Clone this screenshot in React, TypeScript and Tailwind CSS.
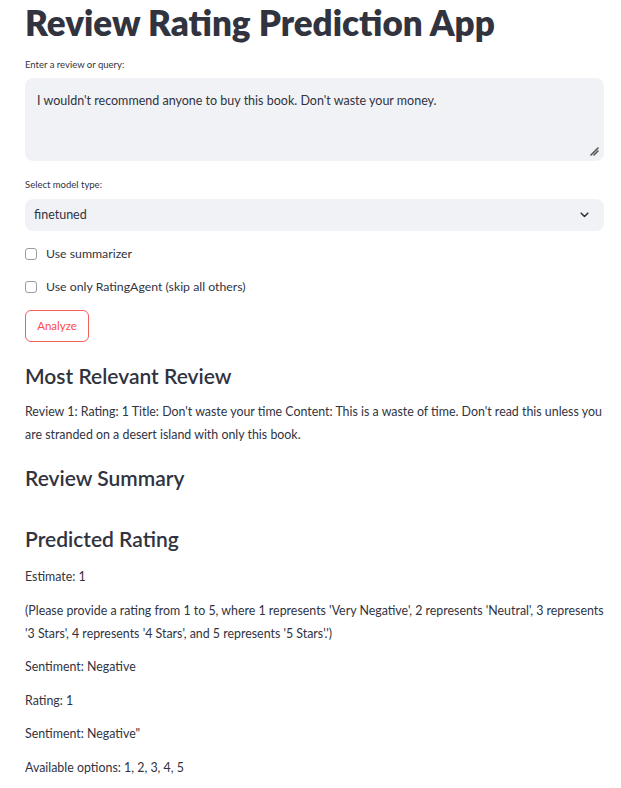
import React, { useState } from 'react';

const font = { fontFamily: 'Lato, "Noto Sans", sans-serif' };

function Check({ label }: { label: string }) {
  const [on, setOn] = useState(false);
  return (
    <label className="flex items-center gap-[9px] h-[20px] cursor-pointer">
      <span
        onClick={() => setOn(!on)}
        className={`w-[12px] h-[12px] rounded-[3px] border border-[#9a9ca6] ${on ? 'bg-[#ff4b4b]' : 'bg-white'}`}
      />
      <span className="text-[12.3px] text-[#31333f]">{label}</span>
    </label>
  );
}

export default function App() {
  const [text, setText] = useState("I wouldn't recommend anyone to buy this book. Don't waste your money.");
  const [model, setModel] = useState('finetuned');

  const results = [
    'Estimate: 1',
    "(Please provide a rating from 1 to 5, where 1 represents 'Very Negative', 2 represents 'Neutral', 3 represents '3 Stars', 4 represents '4 Stars', and 5 represents '5 Stars'.')",
    'Sentiment: Negative',
    'Rating: 1',
    'Sentiment: Negative"',
    'Available options: 1, 2, 3, 4, 5',
  ];

  return (
    <div className="w-[621px] min-h-[788px] bg-white pl-[25px] pr-[17px] text-[#31333f]" style={font}>
      <h1 className="text-[35px] font-extrabold leading-[44px] text-[#31333f]">Review Rating Prediction App</h1>

      <div className="mt-[14px] text-[9.5px] leading-[14px]">Enter a review or query:</div>
      <div className="relative mt-[6px] h-[83px] rounded-[8px] bg-[#f0f2f6]">
        <textarea
          value={text}
          onChange={(e) => setText(e.target.value)}
          className="w-full h-full resize-none bg-transparent pl-[12px] pr-[10px] pt-[14px] text-[12.5px] leading-[18px] text-[#31333f] outline-none"
          style={font}
        />
        <svg className="absolute right-[5px] bottom-[5px]" width="10" height="10" viewBox="0 0 10 10">
          <path d="M2 9 L9 2 M5 9 L9 5" stroke="#555" strokeWidth="1.6" strokeLinecap="round" />
        </svg>
      </div>

      <div className="mt-[17px] text-[9.5px] leading-[14px]">Select model type:</div>
      <div className="relative mt-[7px] h-[32px] rounded-[8px] bg-[#f0f2f6] flex items-center px-[9px]">
        <span className="text-[12.5px]">{model}</span>
        <select
          value={model}
          onChange={(e) => setModel(e.target.value)}
          className="absolute inset-0 opacity-0 cursor-pointer"
        >
          <option value="finetuned">finetuned</option>
          <option value="base">base</option>
        </select>
        <svg className="ml-auto mr-[6px]" width="9" height="6" viewBox="0 0 9 6">
          <path d="M1.2 1.2 L4.5 4.5 L7.8 1.2" stroke="#31333f" strokeWidth="1.6" fill="none" strokeLinecap="round" strokeLinejoin="round" />
        </svg>
      </div>

      <div className="mt-[13px] flex flex-col gap-[13px]">
        <Check label="Use summarizer" />
        <Check label="Use only RatingAgent (skip all others)" />
      </div>

      <button className="mt-[13px] h-[32px] w-[64px] rounded-[6px] border border-[#f25f5c] bg-white text-[11.5px] text-[#ff4b4b]">
        Analyze
      </button>

      <h3 className="mt-[20px] text-[21px] font-semibold leading-[28px]">Most Relevant Review</h3>
      <p className="mt-[10px] text-[12.4px] leading-[23px]">
        Review 1: Rating: 1 Title: Don't waste your time Content: This is a waste of time. Don't read this unless you are
        stranded on a desert island with only this book.
      </p>

      <h3 className="mt-[18px] text-[21px] font-semibold leading-[28px]">Review Summary</h3>

      <h3 className="mt-[33px] text-[21px] font-semibold leading-[28px]">Predicted Rating</h3>
      <div className="mt-[12px] flex flex-col gap-[10.5px]">
        {results.map((r, i) => (
          <p key={i} className="text-[12.4px] leading-[23px]">
            {r}
          </p>
        ))}
      </div>
    </div>
  );
}
